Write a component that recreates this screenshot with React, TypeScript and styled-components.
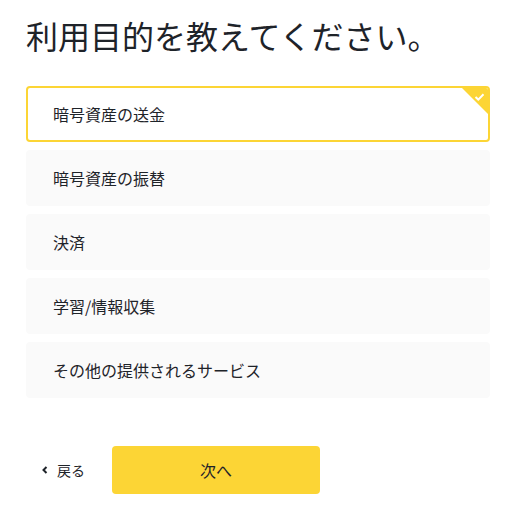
import React, { useState } from "react";
import styled, { createGlobalStyle } from "styled-components";

const Global = createGlobalStyle`
  html, body { margin: 0; padding: 0; background: #fff; }
  body { font-family: "Noto Sans CJK JP", "Noto Sans", sans-serif; color: #1e2329; }
`;

const Page = styled.div`
  width: 519px;
  padding: 13px 29px 0 26px;
  box-sizing: border-box;
`;

const Title = styled.h1`
  margin: 0;
  font-size: 32px;
  font-weight: 400;
  line-height: 44px;
  color: #1e2329;
`;

const List = styled.div`
  margin-top: 29px;
  display: flex;
  flex-direction: column;
  gap: 8px;
`;

const Card = styled.button<{ $selected: boolean }>`
  position: relative;
  overflow: hidden;
  height: 56px;
  box-sizing: border-box;
  display: flex;
  align-items: center;
  padding: 0 0 0 ${(p) => (p.$selected ? 25 : 27)}px;
  border: ${(p) => (p.$selected ? "2px solid #fcd535" : "none")};
  border-radius: 4px;
  background: ${(p) => (p.$selected ? "#fff" : "#fafafa")};
  font-family: inherit;
  font-size: 16px;
  color: #1e2329;
  text-align: left;
  cursor: pointer;
`;

const Corner = styled.span`
  position: absolute;
  top: 0;
  right: 0;
  width: 0;
  height: 0;
  border-top: 26px solid #fcd535;
  border-left: 26px solid transparent;
`;

const Check = styled.svg`
  position: absolute;
  top: 4px;
  right: 3px;
`;

const Footer = styled.div`
  margin-top: 48px;
  display: flex;
  align-items: center;
`;

const Back = styled.button`
  width: 86px;
  display: flex;
  align-items: center;
  gap: 9px;
  padding: 0 0 0 16px;
  border: none;
  background: none;
  font-family: inherit;
  font-size: 14px;
  color: #1e2329;
  cursor: pointer;
`;

const Next = styled.button`
  width: 208px;
  height: 48px;
  border: none;
  border-radius: 4px;
  background: #fcd535;
  font-family: inherit;
  font-size: 16px;
  color: #1e2329;
  cursor: pointer;
`;

const options = [
  "暗号資産の送金",
  "暗号資産の振替",
  "決済",
  "学習/情報収集",
  "その他の提供されるサービス",
];

export default function App() {
  const [sel, setSel] = useState(0);
  return (
    <Page>
      <Global />
      <Title>利用目的を教えてください。</Title>
      <List>
        {options.map((o, i) => (
          <Card key={o} $selected={sel === i} onClick={() => setSel(i)}>
            {o}
            {sel === i && (
              <>
                <Corner />
                <Check width="11" height="10" viewBox="0 0 11 10">
                  <path d="M1.5 5 L4.3 7.6 L9.5 2.2" fill="none" stroke="#fff" strokeWidth="2" />
                </Check>
              </>
            )}
          </Card>
        ))}
      </List>
      <Footer>
        <Back>
          <svg width="6" height="8" viewBox="0 0 6 8">
            <path d="M4.5 1 L1.5 4 L4.5 7" fill="none" stroke="#1e2329" strokeWidth="2" />
          </svg>
          戻る
        </Back>
        <Next>次へ</Next>
      </Footer>
    </Page>
  );
}
